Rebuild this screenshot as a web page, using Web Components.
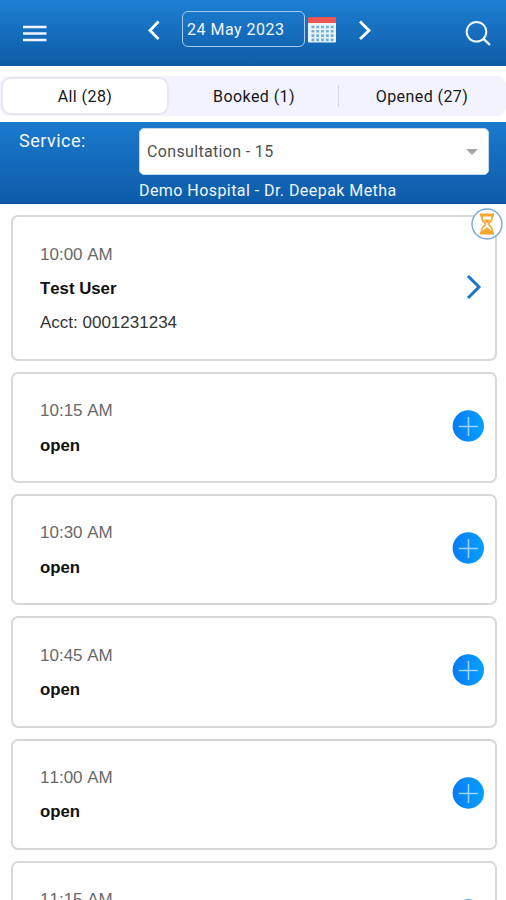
<!DOCTYPE html>
<html lang="en">
<head>
<meta charset="utf-8">
<title>Appointments</title>
<style>
html,body{margin:0;height:100%;overflow:hidden;background:#fff}
body{font-family:Roboto,"Liberation Sans",sans-serif}
</style>
</head>
<body>
<schedule-app></schedule-app>
<script>
const define = (name, html) => {
  const t = document.createElement('template');
  t.innerHTML = html;
  customElements.define(name, class extends HTMLElement {
    constructor() {
      super();
      this.attachShadow({mode: 'open'}).append(t.content.cloneNode(true));
    }
  });
};

define('app-header', `
<style>
:host{display:flex;align-items:flex-start;height:66px;box-sizing:border-box;background:linear-gradient(#1d80d3,#0e5ba5);color:#f1f6fe}
svg{display:block;flex:none}
.menu{margin:25px 0 0 23px}
.prev{margin:20px 0 0 100px}
.date{box-sizing:border-box;width:123px;height:36px;margin:11px 0 0 22px;border:1.5px solid #a9c9ef;border-radius:6px;padding-left:4px;font-size:16px;line-height:35px;letter-spacing:.5px;white-space:nowrap}
.cal{margin:16px 0 0 3px}
.next{margin:20px 0 0 21px}
.search{margin:20px 0 0 93px}
</style>
<svg class="menu" width="24" height="17"><path d="M0 2h23.500M0 8.500h23.500M0 15h23.500" stroke="#f1f6fe" stroke-width="2.600"/></svg>
<svg class="prev" width="13" height="21"><path d="M11.500 1.500 3 10.500l8.500 8.500" fill="none" stroke="#fff" stroke-width="2.800"/></svg>
<div class="date">24 May 2023</div>
<svg class="cal" width="29" height="28"><path d="M0 7h28v18.500a1 1 0 0 1-1 1H1a1 1 0 0 1-1-1z" fill="#e9f3f9"/><path d="M0 7V2q0-1 1-1h26q1 0 1 1v5z" fill="#ea5755"/><path d="M3.500 11h22M3.500 15.300h22M3.500 19.600h22M3.500 23.900h22" stroke="#6fb0da" stroke-width="2.600" stroke-dasharray="2.800 2"/></svg>
<svg class="next" width="14" height="21"><path d="M2 1.500 11 10.500 2 19" fill="none" stroke="#fff" stroke-width="2.800"/></svg>
<svg class="search" width="27" height="27"><circle cx="11.500" cy="11.800" r="9.800" fill="none" stroke="#f1f6fe" stroke-width="2"/><path d="m18.500 18.800 6.500 6.200" stroke="#f1f6fe" stroke-width="2.400"/></svg>
`);

define('filter-tabs', `
<style>
:host{display:block;height:56px;box-sizing:border-box;padding-top:10px;background:#fff}
div{display:grid;grid-template-columns:170px 168px 168px;height:40px;background:#f2f3fe;border-radius:9px}
</style><div><slot></slot></div>`);

define('filter-tab', `
<style>
:host{display:flex;align-items:center;justify-content:center;box-sizing:border-box;font-size:16px;letter-spacing:.42px;color:#17171b}
:host([selected]){background:#fff;border:2px solid #e8e8f0;border-radius:10px;margin:1px}
:host([divided]){background:linear-gradient(#d4d6e1,#d4d6e1) 0 9px/1px 22px no-repeat}
</style><slot></slot>`);

define('service-bar', `
<style>
:host{display:grid;grid-template-columns:139px 350px;grid-template-rows:56px 26px;height:82px;background:linear-gradient(#1b7acd,#0d5ba8);box-shadow:inset 0 -1px #084f9c;color:#f2f7ff}
.label{padding-left:19px;font-size:18px;line-height:38px;letter-spacing:.5px}
.box{display:flex;align-items:center;justify-content:space-between;box-sizing:border-box;height:47px;margin-top:5.500px;padding:1px 10px 0 7px;border:1px solid #c7d7e8;border-radius:5px;background:#fff;color:#505050;font-size:16px;letter-spacing:.34px}
.who{grid-column:2;font-size:16px;line-height:25px;letter-spacing:.44px;white-space:nowrap}
</style>
<div class="label">Service:</div>
<div class="box"><slot name="service"></slot><svg width="12" height="6"><path d="M0 0h12L6 6z" fill="#a6a6a6"/></svg></div>
<div class="who"><slot name="provider"></slot></div>`);

define('add-button', `
<style>:host,svg{display:block}</style>
<svg width="32" height="32"><defs><linearGradient id="g"><stop stop-color="#087cf4"/><stop offset="1" stop-color="#05a0fe"/></linearGradient></defs><circle cx="16.300" cy="16" r="15.700" fill="url(#g)"/><path d="M6.800 16.500h19M16.500 7v19" stroke="#9bd0ff" stroke-width="1.600"/></svg>`);

define('wait-badge', `
<style>:host{display:block;position:absolute;top:-9px;right:-8px}svg{display:block}</style>
<svg width="32" height="32"><circle cx="16" cy="16" r="15" fill="#fff" stroke="#74abdc" stroke-width="1.400"/><g fill="none" stroke="#f6a631"><path d="M9 7h14M9 25h14" stroke-width="3"/><path d="M11 8v2.500c0 3 3.500 4 3.500 5.500S11 18.500 11 21.500V24M21 8v2.500c0 3-3.500 4-3.500 5.500s3.500 2.500 3.500 5.500V24" stroke-width="1.700"/></g><path d="M12.500 11.500h7L16 15.500zM12 24c0-3 2-3 4-5 2 2 4 2 4 5z" fill="#f6a631"/></svg>`);

define('slot-card', `
<style>
:host{display:flex;align-items:center;justify-content:space-between;position:relative;flex:none;box-sizing:border-box;width:485.500px;height:111.200px;padding:0 11px 0 27px;border:2px solid #d8d8d8;border-radius:7px;background:#fff;font:17px/34.300px "Liberation Sans",Arial,sans-serif;font-kerning:none;color:#111}
:host([tall]){height:146px}
.text{padding-top:2px}
.time{color:#696969}
.name{font-weight:700;font-size:16.800px}
.action{padding-bottom:3px}
</style>
<div class="text"><div class="time"><slot name="time"></slot></div><div class="name"><slot name="name"></slot></div><slot></slot></div>
<div class="action"><slot name="action"></slot></div>
<slot name="badge"></slot>`);

define('schedule-app', `
<style>
:host{display:flex;flex-direction:column;height:100vh;overflow:hidden}
app-header,filter-tabs,service-bar{flex:none}
main{display:flex;flex-direction:column;gap:11px;padding:11px 0 0 11px}
.detail{color:#333}
.go{display:block}
</style>
<app-header></app-header>
<filter-tabs><filter-tab selected>All (28)</filter-tab><filter-tab>Booked (1)</filter-tab><filter-tab divided>Opened (27)</filter-tab></filter-tabs>
<service-bar><span slot="service">Consultation - 15</span><span slot="provider">Demo Hospital - Dr. Deepak Metha</span></service-bar>
<main>
<slot-card tall><span slot="time">10:00 AM</span><span slot="name">Test User</span><div class="detail">Acct: 0001231234</div><svg class="go" slot="action" width="18" height="26"><path d="m2 2 11 11L2 24" fill="none" stroke="#1976c9" stroke-width="3"/></svg><wait-badge slot="badge"></wait-badge></slot-card>
<slot-card><span slot="time">10:15 AM</span><span slot="name">open</span><add-button slot="action"></add-button></slot-card>
<slot-card><span slot="time">10:30 AM</span><span slot="name">open</span><add-button slot="action"></add-button></slot-card>
<slot-card><span slot="time">10:45 AM</span><span slot="name">open</span><add-button slot="action"></add-button></slot-card>
<slot-card><span slot="time">11:00 AM</span><span slot="name">open</span><add-button slot="action"></add-button></slot-card>
<slot-card><span slot="time">11:15 AM</span><span slot="name">open</span><add-button slot="action"></add-button></slot-card>
</main>`);
</script>
</body>
</html>
